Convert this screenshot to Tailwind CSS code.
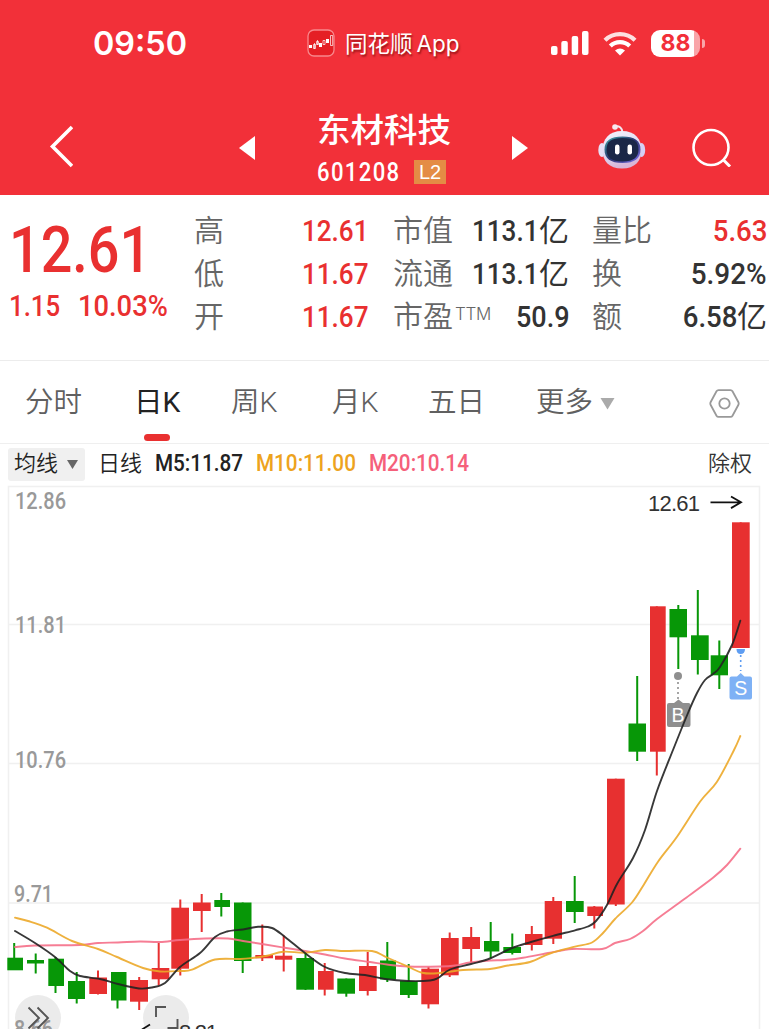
<!DOCTYPE html>
<html lang="zh-CN">
<head>
  <meta charset="UTF-8" />
  <meta name="viewport" content="width=device-width, initial-scale=1.0"/>
  <title>东材科技 601208</title>
  <script src="https://cdn.jsdelivr.net/npm/@tailwindcss/browser@4"></script>
</head>
<body class="bg-white w-[769px] h-[1029px] overflow-hidden font-['Roboto','Noto_Sans_CJK_SC',sans-serif] text-[#333]">

  <!-- header -->
  <header class="h-[195px] bg-[#f23039] text-white">
    <div class="h-[86px] flex items-center">
      <div class="w-[186px] pl-[93px] whitespace-nowrap font-['Inter'] font-semibold text-[33px] leading-none"><span class="inline-block origin-left scale-x-[.98]">09:50</span></div>
      <div class="ml-[121px] w-[160px] flex items-center">
        <svg class="w-7 h-7 shrink-0" viewBox="0 0 28 28" fill="none">
          <rect x="1" y="1" width="26" height="26" rx="6" fill="#e51f25" stroke="#f7888c" stroke-width="1.3"/>
          <path d="M2 16h3v3H2zM12 14h3v4h-3zM19 10h3v4h-3z" fill="#fff"/>
          <path d="M6.5 15.5h2v4h-2zM9.5 12.500h2v3h-2zM16 11.500h2v4h-2zM23.500 6.500h2.200v10h-2.200zM10.500 11v5M7.500 14v6" stroke="#fff" stroke-width=".7"/>
        </svg>
        <span class="ml-2.5 mt-0.5 whitespace-nowrap text-[22.500px] leading-none font-['Inter','Noto_Sans_CJK_SC',sans-serif] [text-shadow:1px_2px_2px_rgba(90,0,0,.6)]">同花顺<span class="ml-1">App</span></span>
      </div>
      <svg class="ml-[84px] w-[38px] h-6" viewBox="0 0 38 24" fill="#fff">
        <rect x="0" y="15" width="6.500" height="9" rx="2"/>
        <rect x="10.300" y="10" width="6.500" height="14" rx="2"/>
        <rect x="20.700" y="5" width="6.500" height="19" rx="2"/>
        <rect x="31" y="0" width="6.500" height="24" rx="2"/>
      </svg>
      <svg class="ml-[14px] w-[34px] h-[25px]" viewBox="0 0 34 25" fill="none" stroke="#fff" stroke-width="4.300">
        <path d="M2 9.300a21.500 21.500 0 0 1 30 0" opacity=".85"/>
        <path d="M7.300 15a14 14 0 0 1 19.400 0"/>
        <path d="M17 24.500l-5-5q5-4.200 10 0z" fill="#fff" stroke="none"/>
      </svg>
      <div class="ml-[14px] w-[49px] h-[27px] rounded-[9px] flex items-center bg-linear-to-r from-white from-88% to-[#f9a5a9] to-88% justify-center text-[#f23039] font-['Inter'] font-bold text-[23px] leading-none"><span>88</span></div>
      <div class="ml-0.5 w-[3px] h-[9px] rounded-r-full bg-[#f9a5a9]"></div>
    </div>
    <div class="h-[109px] flex">
      <svg class="ml-[49px] mt-[39px] w-6 h-[43px]" viewBox="0 0 24 43" fill="none" stroke="#fff" stroke-width="3.600"><path d="M23 2L3.500 21.500 23 41"/></svg>
      <svg class="ml-[166px] mt-[50px] w-4 h-6" viewBox="0 0 16 24" fill="#fff"><path d="M16 0v24L0 12z"/></svg>
      <div class="ml-[62px] mt-[27px] w-[135px]">
        <h1 class="text-[33.500px] leading-[36px] font-medium whitespace-nowrap">东材科技</h1>
        <div class="flex items-center mt-2.5 h-[26px]">
          <span class="w-[97px] text-[26px] leading-none font-medium"><span class="inline-block origin-left scale-x-[.85] tracking-[1.600px]">601208</span></span>
          <span class="w-8 h-6 bg-[#e48c45] font-['Liberation_Sans'] text-[20px] leading-[25px] text-center">L2</span>
        </div>
      </div>
      <svg class="ml-[60px] mt-[50px] w-4 h-6" viewBox="0 0 16 24" fill="#fff"><path d="M0 0v24L16 12z"/></svg>
      <svg class="ml-[69px] mt-[37px] w-[50px] h-[48px]" viewBox="0 0 50 48">
        <defs>
          <linearGradient id="shell" x1="0" y1="0" x2="0.300" y2="1"><stop offset="0" stop-color="#f6f3fb"/><stop offset=".6" stop-color="#ddd9f3"/><stop offset="1" stop-color="#d9b5d6"/></linearGradient>
          <linearGradient id="rim" x1="0" y1="0" x2="1" y2="1"><stop offset="0" stop-color="#3fa6a4"/><stop offset=".5" stop-color="#2b3370"/><stop offset="1" stop-color="#7f74ef"/></linearGradient>
        </defs>
        <path d="M18 3.500q7-1 7.500 6" fill="none" stroke="#f2e8f1" stroke-width="2"/>
        <circle cx="18" cy="4" r="2.800" fill="#f7eaf0"/>
        <ellipse cx="5" cy="27" rx="3.700" ry="7" fill="#e6e0f5"/>
        <ellipse cx="44.500" cy="27" rx="3.700" ry="7" fill="#d5cff5"/>
        <path d="M25 8c13 0 19.500 8 19.500 19s-6.500 18.500-19.500 18.500S5.500 38 5.500 27 12 8 25 8z" fill="url(#shell)"/>
        <path d="M25.500 13.500c12 0 18 4 18 13s-6 13.500-18 13.500-18-4.500-18-13.500 6-13 18-13z" fill="url(#rim)"/>
        <path d="M25.500 15c11 0 16 3.500 16 11.500s-5 12-16 12-16-4-16-12 5-11.500 16-11.500z" fill="#1a2747"/>
        <rect x="18" y="21.500" width="4.500" height="10" rx="2.200" fill="#fff"/>
        <rect x="30.500" y="21.500" width="4.500" height="10" rx="2.200" fill="#fff"/>
      </svg>
      <svg class="ml-[45px] mt-[41px] w-10 h-10" viewBox="0 0 40 40" fill="none" stroke="#fff" stroke-width="2.600"><circle cx="19" cy="20.500" r="17.500"/><path d="M31 32.500l7 7" stroke-width="3"/></svg>
    </div>
  </header>

  <!-- quote -->
  <section class="h-[166px] border-b border-[#ececec] flex text-[#333]">
    <div class="w-[194px] pl-[9px] text-[#e93030] font-medium">
      <div class="mt-[24px] text-[64px] leading-[64px]"><span class="inline-block origin-left scale-x-[.87]">12.61</span></div>
      <div class="mt-[7px] flex text-[30px] leading-[32px]">
        <span class="w-[69px]"><span class="inline-block origin-left scale-x-[.86]">1.15</span></span>
        <span class="inline-block origin-left scale-x-[.91]">10.03%</span>
      </div>
    </div>
    <div class="mt-[14px] w-[175px] flex flex-col text-[30px]">
      <div class="h-[43px] flex items-center justify-between"><span class="font-[350] text-[#666]">高</span><span class="inline-block origin-right scale-x-[.87] font-medium text-[#e93030]">12.61</span></div>
      <div class="h-[43px] flex items-center justify-between"><span class="font-[350] text-[#666]">低</span><span class="inline-block origin-right scale-x-[.87] font-medium text-[#e93030]">11.67</span></div>
      <div class="h-[43px] flex items-center justify-between"><span class="font-[350] text-[#666]">开</span><span class="inline-block origin-right scale-x-[.87] font-medium text-[#e93030]">11.67</span></div>
    </div>
    <div class="mt-[14px] ml-[24px] w-[176px] flex flex-col text-[30px]">
      <div class="h-[43px] flex items-center justify-between"><span class="font-[350] text-[#666]">市值</span><span class="flex items-center"><span class="-ml-5 inline-block origin-right scale-x-[.87] font-medium">113.1</span>亿</span></div>
      <div class="h-[43px] flex items-center justify-between"><span class="font-[350] text-[#666]">流通</span><span class="flex items-center"><span class="-ml-5 inline-block origin-right scale-x-[.87] font-medium">113.1</span>亿</span></div>
      <div class="h-[43px] flex items-center justify-between"><span class="font-[350] text-[#666] flex items-center">市盈<span class="ml-0.5 mb-1 text-[17px] font-['Inter'] font-light tracking-[-.3px]">TTM</span></span><span class="-ml-5 inline-block origin-right scale-x-[.9] font-medium">50.9</span></div>
    </div>
    <div class="mt-[14px] ml-[23px] w-[175px] flex flex-col text-[30px]">
      <div class="h-[43px] flex items-center justify-between"><span class="font-[350] text-[#666]">量比</span><span class="inline-block origin-right scale-x-[.92] font-medium text-[#e93030]">5.63</span></div>
      <div class="h-[43px] flex items-center justify-between"><span class="font-[350] text-[#666]">换</span><span class="inline-block origin-right scale-x-[.93] font-medium">5.92%</span></div>
      <div class="h-[43px] flex items-center justify-between"><span class="font-[350] text-[#666]">额</span><span class="flex items-center"><span class="inline-block origin-right scale-x-[.92] font-medium">6.58</span>亿</span></div>
    </div>
  </section>

  <!-- period tabs -->
  <nav class="h-[83px] border-b border-[#efefef] flex text-[28.500px] leading-[84px] font-[350] text-[#606060] whitespace-nowrap">
    <span class="ml-[25px] w-[109px]">分时</span>
    <span class="w-[97px] h-[82px] relative font-normal text-[#222]">日K<i class="absolute left-[10px] bottom-[2px] w-[26px] h-[7px] rounded-full bg-[#e93030]"></i></span>
    <span class="w-[101px]">周K</span>
    <span class="w-[96px]">月K</span>
    <span class="w-[108px]">五日</span>
    <span class="w-[64px]">更多</span>
    <svg class="mt-[37px] w-[15px] h-3" viewBox="0 0 15 12" fill="#aaa"><path d="M0.500 0h14L7.500 11.500z"/></svg>
    <svg class="ml-[94px] mt-[28px] w-[31px] h-[29px]" viewBox="0 0 31 29" fill="none" stroke="#999" stroke-width="1.800"><path d="M9.500 1.200h12q1.300 0 2 1.100l5.800 10.700q.8 1.500 0 3l-5.800 10.700q-.7 1.100-2 1.100h-12q-1.300 0-2-1.100L1.700 16q-.8-1.500 0-3L7.500 2.300q.7-1.100 2-1.100z"/><circle cx="15.500" cy="14.500" r="5.200"/></svg>
  </nav>

  <!-- moving averages -->
  <div class="h-[36px] flex items-center text-[22px] leading-none whitespace-nowrap">
    <div class="ml-2 mt-1 w-[77px] h-[33px] rounded-[3px] bg-[#f0f0f0] flex items-center pl-1.5 font-[350] text-[#222]">均线
      <svg class="ml-[9px] w-[11px] h-[9px]" viewBox="0 0 11 9" fill="#666"><path d="M0 0h11L5.500 9z"/></svg>
    </div>
    <span class="ml-[13px] mt-[3px] w-[57px] font-[350] text-[#222]">日线</span>
    <span class="mt-[3px] w-[101px] font-medium text-[#222]"><span class="inline-block origin-left scale-x-[.9] text-[23px]">M5:11.87</span></span>
    <span class="mt-[3px] w-[113px] font-medium text-[#eda31d]"><span class="inline-block origin-left scale-x-[.9] text-[23px]">M10:11.00</span></span>
    <span class="mt-[3px] w-[339px] font-medium text-[#f5607a]"><span class="inline-block origin-left scale-x-[.9] text-[23px]">M20:10.14</span></span>
    <span class="mt-[3px] font-[350] text-[#333]">除权</span>
  </div>

  <!-- k-line chart -->
  <svg class="block w-[769px] h-[549px]" viewBox="0 480 769 549">
    <g fill="none" stroke="#f0f0f0" stroke-width="1.500">
      <path d="M8.500 1029V486.500H759.500V1029"/>
      <path d="M8 624.500H760M8 763.500H760M8 903H760"/>
    </g>
    <g class="font-['Roboto'] font-medium" font-size="23" fill="#999">
      <text x="15" y="509" textLength="51" lengthAdjust="spacingAndGlyphs">12.86</text>
      <text x="15" y="633" textLength="51" lengthAdjust="spacingAndGlyphs">11.81</text>
      <text x="15" y="768" textLength="51" lengthAdjust="spacingAndGlyphs">10.76</text>
      <text x="14" y="902" textLength="39" lengthAdjust="spacingAndGlyphs">9.71</text>
    </g>
    <g id="candles"></g>
    <g>
      <circle cx="38" cy="1018" r="23" fill="#e9e9e9" fill-opacity=".9"/>
      <circle cx="166" cy="1018" r="23" fill="#e9e9e9" fill-opacity=".9"/>
      <text class="font-['Roboto'] font-medium" x="14" y="1037" font-size="23" fill="#999" textLength="39" lengthAdjust="spacingAndGlyphs">8.66</text>
      <path d="M28.500 1007.500L39 1018l-10.500 10.500M37.500 1007.500L48 1018l-10.500 10.500M156 1017v-10h10M177.500 1019v9h-10" fill="none" stroke="#555" stroke-width="1.900"/>
    </g>
    <g fill="none" stroke="#111">
      <path d="M710.500 502.300h30M731 496.500l10 5.800-10 5.800" stroke-width="1.800"/>
      <path d="M150 1024.500l-8 5" stroke-width="1.800"/>
    </g>
    <g class="font-['Liberation_Sans']" font-size="22" fill="#333">
      <text x="648" y="510.500" textLength="52">12.61</text>
      <text x="179" y="1040" textLength="39">8.21</text>
    </g>
    <g>
      <circle cx="678" cy="676" r="4" fill="#8f8f8f"/>
      <path d="M678 682v18" stroke="#8f8f8f" stroke-width="1.600" stroke-dasharray="2 3"/>
      <path d="M669 703h5l4.500-3.500 4.500 3.500h5.500q2 0 2 2v20q0 2-2 2H669q-2 0-2-2v-20q0-2 2-2z" fill="#8f8f8f"/>
      <path d="M736.500 649h8.500q0 5-4.300 5t-4.200-5z" fill="#5e9df2"/>
      <path d="M740.700 655v16" stroke="#5e9df2" stroke-width="1.600" stroke-dasharray="2 3"/>
      <path d="M731.500 676.500h5.500l3.700-3.500 3.700 3.500h5.600q2 0 2 2v19q0 2-2 2h-18.500q-2 0-2-2v-19q0-2 2-2z" fill="#7eb1f5"/>
      <g class="font-['Liberation_Sans']" font-size="19.500" fill="#fff" text-anchor="middle">
        <text x="678" y="722">B</text>
        <text x="740.700" y="695">S</text>
      </g>
    </g>
    <g id="lines" fill="none" stroke-width="1.900" stroke-linecap="round"></g>
  </svg>

  <script>
    const NS = 'http://www.w3.org/2000/svg';
    const UP = '#e73030', DOWN = '#079707';

    // [left, right, open/close top, bottom, high, low, wick x, up]
    const candles = [
      [7.3, 23, 957.7, 970.3, 943, 970, 14.2, 0],
      [27, 44, 960, 963.5, 953.5, 973.5, 35.7, 0],
      [48.3, 64, 958.7, 986, 957, 993, 55.5, 0],
      [68, 85, 981, 999, 972, 1003.5, 76.7, 0],
      [89.3, 107, 977.5, 994, 970.5, 994.5, 98, 1],
      [111, 126.5, 972, 1000.5, 972, 1008.5, 117.5, 0],
      [130, 148, 980, 1001.7, 977, 1010, 139.2, 1],
      [151.7, 169.3, 968, 979.3, 943, 985.5, 158.7, 1],
      [171.3, 189, 907.7, 968.7, 899.5, 975.5, 180.3, 1],
      [193, 210.7, 902.5, 911, 894, 932, 201.7, 1],
      [214.3, 230, 900, 907, 893, 916.5, 221.3, 0],
      [234, 251.5, 902.5, 961, 902.5, 973, 242.7, 0],
      [255.3, 273, 955, 958.3, 924.5, 961, 262.3, 1],
      [275, 292.3, 955.7, 959.7, 935.5, 971.5, 283.7, 1],
      [296.3, 314, 958, 989.7, 953, 990, 305.5, 0],
      [318, 333.7, 971, 989.7, 963, 995.5, 324.7, 1],
      [337.3, 355, 978.5, 993.7, 978.5, 996.7, 346.3, 0],
      [359, 376.7, 966, 991, 952, 995.5, 367.7, 1],
      [380, 396, 960.5, 979.5, 942, 982, 387.3, 0],
      [400, 417.7, 981, 995, 964, 998, 408.7, 0],
      [421.3, 439, 968.7, 1004.3, 967, 1008.5, 428.5, 1],
      [441, 458.7, 938, 975.3, 932.5, 977, 449.7, 1],
      [462.3, 480, 937, 949, 927, 963, 471.2, 1],
      [484, 499.3, 941, 951.5, 922, 958, 490.7, 0],
      [503.3, 521, 947, 953, 933.5, 954.5, 512.3, 0],
      [525, 542.5, 934, 945, 926, 950.5, 531.8, 1],
      [544.7, 562, 901, 938.7, 897, 944, 553.3, 1],
      [566, 583.7, 901, 912, 876, 923, 574.7, 0],
      [587.3, 603, 906.5, 916, 906, 928.5, 594.3, 1],
      [607, 624.7, 778.7, 904.5, 778.7, 906, 615.8, 1],
      [628.5, 646, 723.5, 751.7, 676, 761, 637.2, 0],
      [650, 665.7, 606.3, 751.7, 606.3, 775.5, 656.8, 1],
      [669.5, 687, 609, 637.3, 605, 669, 678.3, 0],
      [691, 708.7, 635.3, 660, 590, 674.5, 697.8, 0],
      [710.7, 728, 655.3, 675.3, 640.5, 689, 719.3, 0],
      [732, 749.7, 522.3, 648, 522.3, 648, 740.7, 1]
    ];

    const averages = [
      ['#f56f88', [[15,947],[35,945.5],[80,945],[98,943],[118,942.5],[140,941.5],[160,942],[180,940],[205,938.5],[228,938.5],[243,941],[262,944],[283,947.5],[305,951],[325,954.5],[345,958.5],[370,962],[387,964.5],[408,966.5],[440,966.5],[455,965.5],[470,962.5],[490,960.5],[505,960],[523,957.7],[550,952.7],[572,949],[602,949],[615,943],[630,939],[643,931],[657,919],[683,900],[713,877.7],[727,865],[740.3,848.7]]],
      ['#eca829', [[15,917.7],[28,921],[47,927.7],[72,941],[98,949],[117,957],[143,968],[160,971.5],[180,971],[192,969.7],[215,959.5],[240,959],[252,958],[267,955.7],[283,951.7],[305,952.7],[325,950],[345,951],[372,951],[387,957.5],[408,966.7],[422,972.7],[437,973.3],[463,970],[490,969],[508,965.5],[530,962],[550,953.5],[575,946.7],[592,942.5],[603,933],[615,919],[632,902.5],[643,886],[658,861.7],[677,836.7],[700,801.7],[717,781.7],[734,750],[740.3,736]]],
      ['#222222', [[15,931],[35,943],[55,957],[70,971],[80,976],[100,979],[118,984],[139,988.5],[152,987.5],[165,983],[180,967],[200,953],[215,937],[227,931.5],[243,929.5],[258,926.8],[272,928],[285,937],[305,953],[325,967],[345,973],[365,975],[385,979],[408,981],[430,980.5],[438,978],[450,969.5],[471,964],[490,958.5],[512,948],[531,942],[553,935.8],[575,930.3],[588,926.5],[596,921],[607,905],[617,884],[633,858],[645,830],[657,791],[673,750],[688,713],[697,693],[705,680],[713,674],[720,667],[732,645],[740.3,620.7]]]
    ];

    function add(parent, tag, attrs) {
      const el = document.createElementNS(NS, tag);
      for (const k in attrs) el.setAttribute(k, attrs[k]);
      parent.appendChild(el);
    }

    // catmull-rom spline as cubic beziers
    function smooth(p) {
      let d = `M${p[0]}`;
      for (let i = 0; i < p.length - 1; i++) {
        const a = p[i - 1] || p[i], b = p[i], c = p[i + 1], e = p[i + 2] || c;
        d += `C${b[0] + (c[0] - a[0]) / 6},${b[1] + (c[1] - a[1]) / 6} ${c[0] - (e[0] - b[0]) / 6},${c[1] - (e[1] - b[1]) / 6} ${c}`;
      }
      return d;
    }

    const box = document.getElementById('candles');
    candles.forEach(([l, r, t, b, hi, lo, x, up]) => {
      const fill = up ? UP : DOWN;
      add(box, 'rect', { x: x - 1, y: hi, width: 2, height: lo - hi, fill });
      add(box, 'rect', { x: l, y: t, width: r - l, height: b - t, fill });
    });

    const lines = document.getElementById('lines');
    averages.forEach(([stroke, points]) => {
      add(lines, 'path', { d: smooth(points), stroke, 'stroke-opacity': 0.9 });
    });
  </script>
</body>
</html>
